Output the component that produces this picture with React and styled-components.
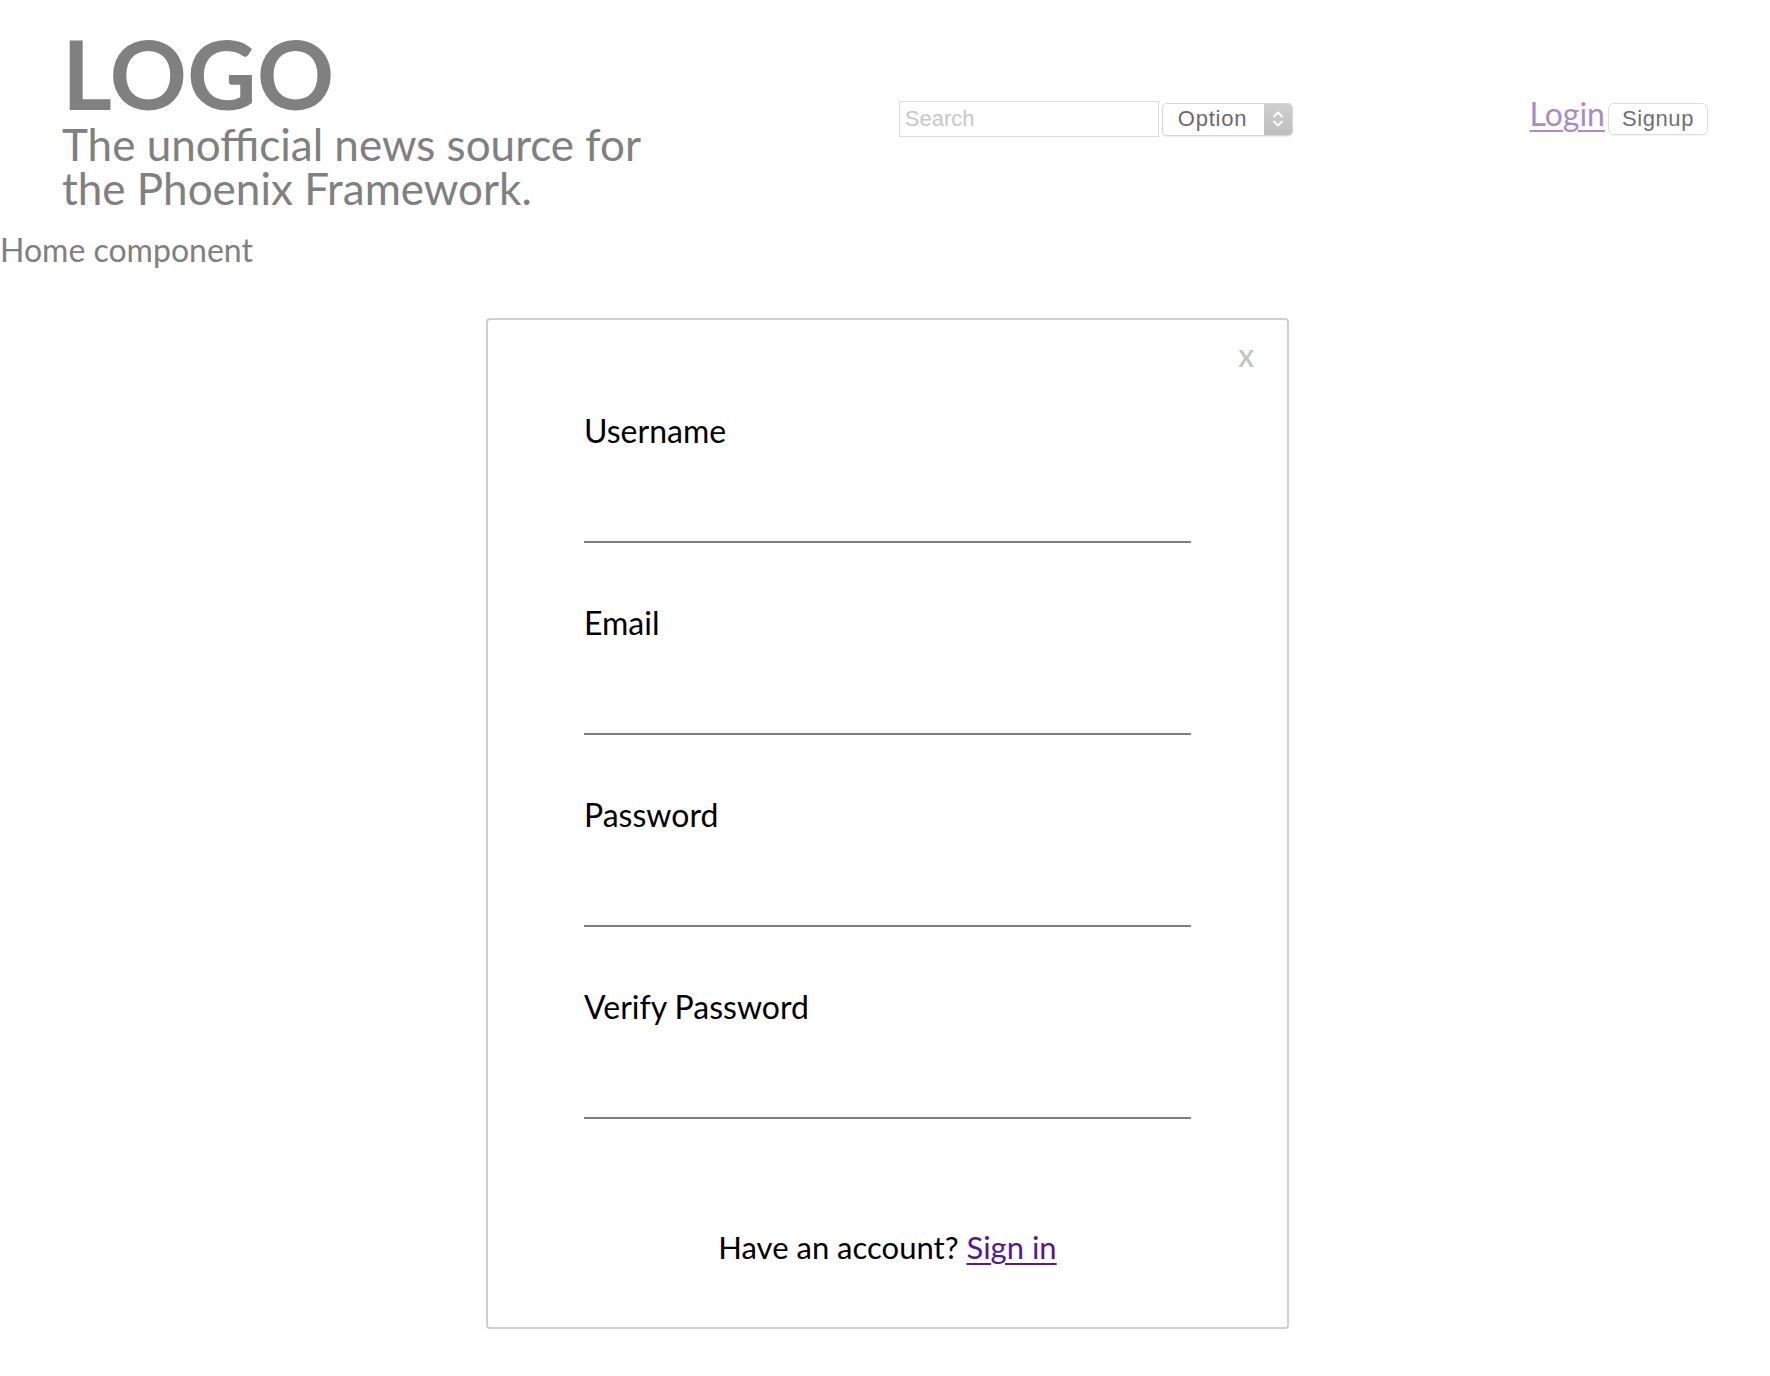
import React from "react";
import styled, { createGlobalStyle } from "styled-components";

const GlobalStyle = createGlobalStyle`
  * {
    box-sizing: border-box;
  }
  body {
    margin: 0;
    background: #ffffff;
    font-family: Lato, "Noto Sans", sans-serif;
  }
`;

const Header = styled.header`
  display: flex;
  justify-content: space-between;
  align-items: flex-start;
  padding: 0 62px;
`;

const Brand = styled.div`
  width: 600px;
  padding-top: 24px;
  color: #808080;
`;

const Logo = styled.div`
  font-size: 96px;
  font-weight: 700;
  line-height: 98px;
`;

const Tagline = styled.div`
  font-size: 44px;
  line-height: 44px;
`;

const SearchGroup = styled.div`
  display: flex;
  align-items: center;
  gap: 3px;
  margin-top: 101px;
`;

const SearchInput = styled.input`
  width: 260px;
  height: 36px;
  padding: 0 5px;
  border: 1px solid #dcdcdc;
  font-family: "Liberation Sans", Arial, sans-serif;
  font-size: 22px;
  color: #333;
  outline: none;
  &::placeholder {
    color: #c8c8c8;
  }
`;

const Select = styled.div`
  display: flex;
  align-items: stretch;
  width: 131px;
  height: 33px;
  border: 1px solid #d6d6d6;
  border-radius: 5px;
  overflow: hidden;
  box-shadow: 0 1px 1px rgba(0, 0, 0, 0.08);
  background: #fff;
`;

const SelectText = styled.span`
  flex: 1;
  display: flex;
  align-items: center;
  padding-left: 15px;
  font-family: "Liberation Sans", Arial, sans-serif;
  font-size: 22px;
  letter-spacing: 0.8px;
  color: #6b6b6b;
`;

const Stepper = styled.span`
  width: 28px;
  display: flex;
  align-items: center;
  justify-content: center;
  background: linear-gradient(#cfcfcf, #bdbdbd);
`;

const AuthGroup = styled.div`
  display: flex;
  align-items: baseline;
  gap: 3px;
  margin-top: 94px;
`;

const LoginLink = styled.a`
  font-size: 32px;
  color: #aa8cc5;
  text-decoration: underline;
  text-underline-offset: 4px;
  text-decoration-thickness: 2px;
`;

const SignupButton = styled.button`
  width: 100px;
  height: 32px;
  padding: 0;
  border: 1px solid #dedede;
  border-radius: 6px;
  background: #fff;
  box-shadow: 0 1px 1px rgba(0, 0, 0, 0.05);
  font-family: "Liberation Sans", Arial, sans-serif;
  font-size: 22px;
  letter-spacing: 0.6px;
  color: #707070;
`;

const HomeText = styled.div`
  margin-top: 20px;
  font-size: 32px;
  color: #808080;
`;

const Modal = styled.div`
  position: relative;
  width: 803px;
  margin: 49px 0 0 calc(50% - 399px);
  padding: 93px 96px 62px;
  border: 2px solid #cfcfcf;
  border-radius: 4px;
`;

const Close = styled.span`
  position: absolute;
  top: 24px;
  right: 33px;
  font-size: 23px;
  font-weight: 700;
  color: #c4c4c4;
`;

const Field = styled.div`
  margin-bottom: ${(p) => (p.$last ? "0" : "62px")};
`;

const Label = styled.label`
  display: block;
  font-size: 32px;
  line-height: 36px;
  color: #000;
`;

const Input = styled.input`
  display: block;
  width: 100%;
  height: 94px;
  border: none;
  border-bottom: 2px solid #808080;
  font-family: Lato, sans-serif;
  font-size: 28px;
  outline: none;
`;

const Footer = styled.div`
  margin-top: 110px;
  text-align: center;
  font-size: 31px;
  line-height: 36px;
  color: #000;
`;

const SignInLink = styled.a`
  color: #551a8b;
  text-decoration: underline;
  text-underline-offset: 4px;
  text-decoration-thickness: 2px;
`;

const Chevrons = () => (
  <svg width="12" height="20" viewBox="0 0 12 20" fill="none" stroke="#fff" strokeWidth="1.8" strokeLinecap="round" strokeLinejoin="round">
    <path d="M2 7.5 L6 3.5 L10 7.5" />
    <path d="M2 12.5 L6 16.5 L10 12.5" />
  </svg>
);

const fields = ["Username", "Email", "Password", "Verify Password"];

const App = () => {
  return (
    <>
      <GlobalStyle />
      <Header>
        <Brand>
          <Logo>LOGO</Logo>
          <Tagline>The unofficial news source for the Phoenix Framework.</Tagline>
        </Brand>
        <SearchGroup>
          <SearchInput placeholder="Search" />
          <Select>
            <SelectText>Option</SelectText>
            <Stepper>
              <Chevrons />
            </Stepper>
          </Select>
        </SearchGroup>
        <AuthGroup>
          <LoginLink href="#">Login</LoginLink>
          <SignupButton>Signup</SignupButton>
        </AuthGroup>
      </Header>
      <HomeText>Home component</HomeText>
      <Modal>
        <Close>X</Close>
        {fields.map((f, i) => (
          <Field key={f} $last={i === fields.length - 1}>
            <Label>{f}</Label>
            <Input type={f.includes("Password") ? "password" : "text"} />
          </Field>
        ))}
        <Footer>
          Have an account? <SignInLink href="#">Sign in</SignInLink>
        </Footer>
      </Modal>
    </>
  );
};

export default App;
